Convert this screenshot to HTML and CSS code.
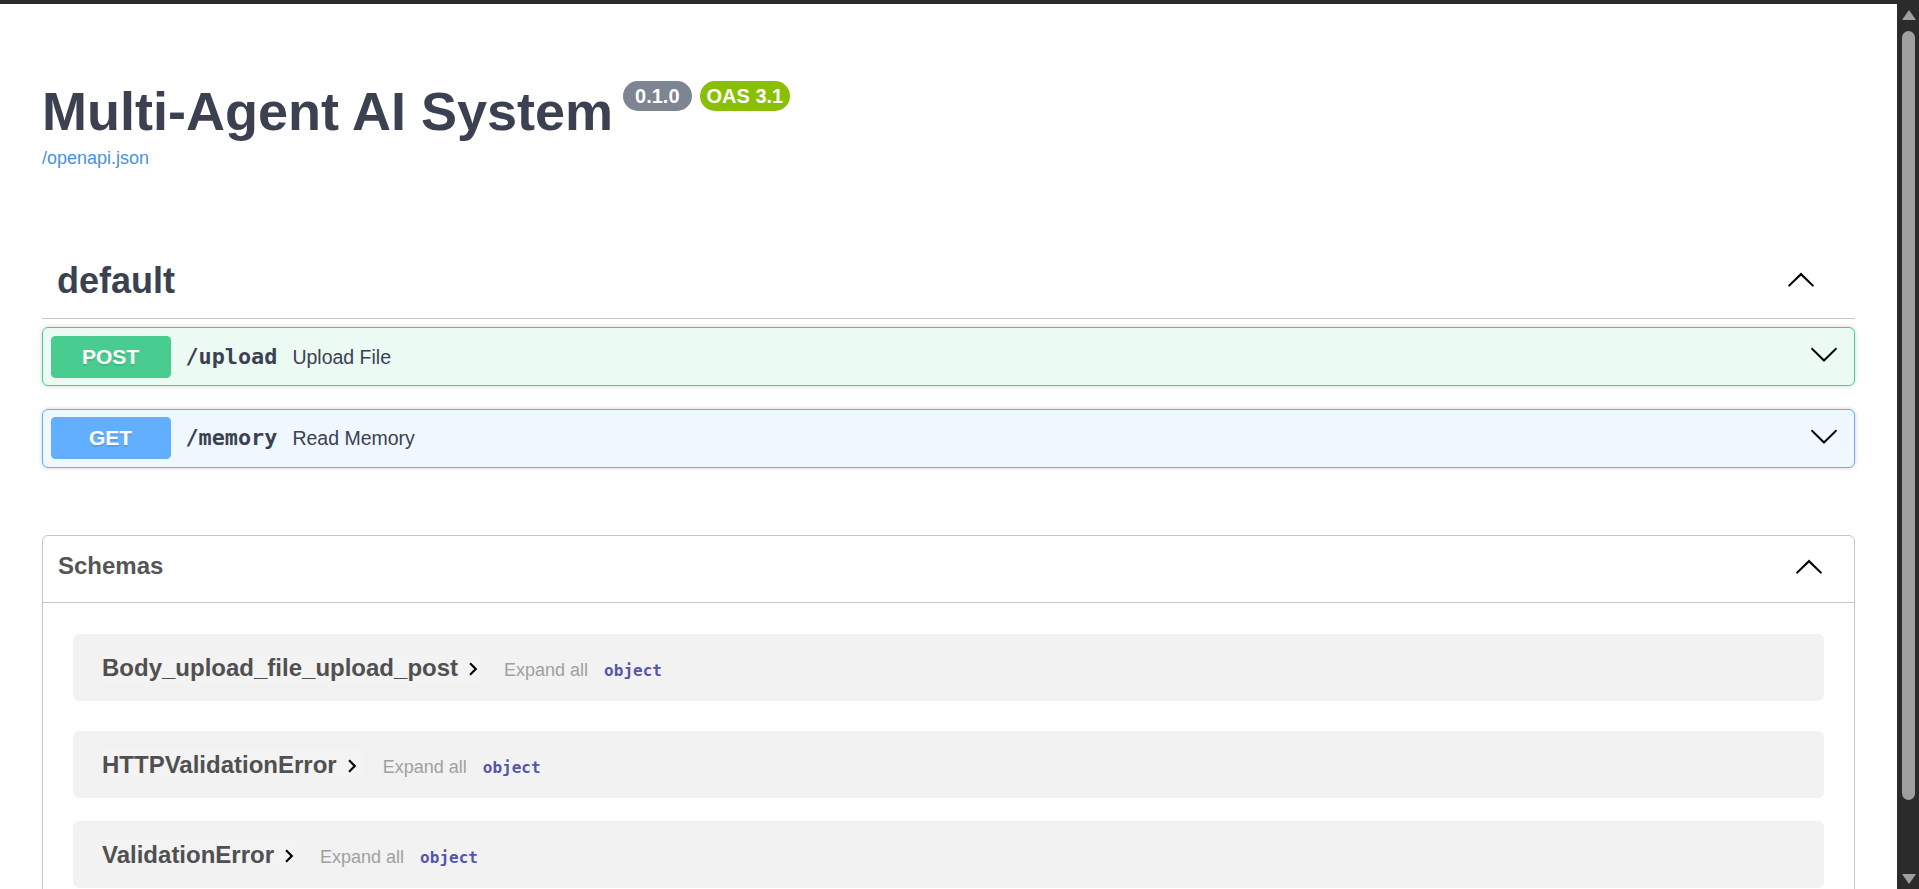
FILE: index.html
```html
<!DOCTYPE html>
<html lang="en">
<head>
<meta charset="utf-8">
<title>Multi-Agent AI System - Swagger UI</title>
<link rel="stylesheet" href="styles.css">
</head>
<body>
<div class="window">
  <div class="chrome-top"></div>
  <main class="page">
    <div class="wrapper">
      <section class="info">
        <h2 class="title">
          <span class="title-text">Multi-Agent AI System</span>
          <span class="badge badge-version">0.1.0</span>
          <span class="badge badge-oas">OAS 3.1</span>
        </h2>
        <a class="spec-link" href="#">/openapi.json</a>
      </section>

      <section class="tag-section">
        <h3 class="tag">
          <span class="tag-name">default</span>
          <button class="tag-arrow" type="button" aria-label="Collapse operation">
            <svg viewBox="0 0 20 20" width="30" height="30"><path d="M17.418 14.908c.272.268.709.268.979 0s.271-.701 0-.969l-7.908-7.83c-.27-.268-.707-.268-.979 0l-7.908 7.83c-.27.268-.27.701 0 .969.271.268.709.268.979 0L10 7.797l7.418 7.111z"/></svg>
          </button>
        </h3>

        <div class="opblock opblock-post">
          <div class="summary-control">
            <span class="method method-post">POST</span>
            <span class="path">/upload</span>
            <span class="desc">Upload File</span>
          </div>
          <svg class="op-arrow" viewBox="0 0 20 20" width="30" height="30"><path d="M17.418 6.109c.272-.268.709-.268.979 0s.271.701 0 .969l-7.908 7.83c-.27.268-.707.268-.979 0l-7.908-7.830c-.27-.268-.27-.701 0-.969.271-.268.709-.268.979 0L10 13.25l7.418-7.141z"/></svg>
        </div>

        <div class="opblock opblock-get">
          <div class="summary-control">
            <span class="method method-get">GET</span>
            <span class="path">/memory</span>
            <span class="desc">Read Memory</span>
          </div>
          <svg class="op-arrow" viewBox="0 0 20 20" width="30" height="30"><path d="M17.418 6.109c.272-.268.709-.268.979 0s.271.701 0 .969l-7.908 7.83c-.27.268-.707.268-.979 0l-7.908-7.83c-.27-.268-.27-.701 0-.969.271-.268.709-.268.979 0L10 13.25l7.418-7.141z"/></svg>
        </div>
      </section>

      <section class="models">
        <h4 class="models-header">
          <span>Schemas</span>
          <svg viewBox="0 0 20 20" width="30" height="30"><path d="M17.418 14.908c.272.268.709.268.979 0s.271-.701 0-.969l-7.908-7.83c-.27-.268-.707-.268-.979 0l-7.908 7.83c-.27.268-.27.701 0 .969.271.268.709.268.979 0L10 7.797l7.418 7.111z"/></svg>
        </h4>
        <div class="models-list">
          <div class="model-container model-first">
            <div class="model-box">
              <span class="model-control"><span class="model-title">Body_upload_file_upload_post</span><svg class="model-toggle" viewBox="0 0 24 24" width="26" height="26"><path d="M10 6 8.59 7.41 13.17 12l-4.58 4.59L10 18l6-6z"/></svg></span>
              <span class="expand-all">Expand all</span>
              <span class="prop-type">object</span>
            </div>
          </div>
          <div class="model-container model-middle">
            <div class="model-box">
              <span class="model-control"><span class="model-title">HTTPValidationError</span><svg class="model-toggle" viewBox="0 0 24 24" width="26" height="26"><path d="M10 6 8.59 7.41 13.17 12l-4.58 4.59L10 18l6-6z"/></svg></span>
              <span class="expand-all">Expand all</span>
              <span class="prop-type">object</span>
            </div>
          </div>
          <div class="model-container model-last">
            <div class="model-box">
              <span class="model-control"><span class="model-title">ValidationError</span><svg class="model-toggle" viewBox="0 0 24 24" width="26" height="26"><path d="M10 6 8.59 7.41 13.17 12l-4.58 4.59L10 18l6-6z"/></svg></span>
              <span class="expand-all">Expand all</span>
              <span class="prop-type">object</span>
            </div>
          </div>
        </div>
      </section>
    </div>
  </main>
</div>
<div class="scrollbar" aria-hidden="true">
  <span class="sb-up"></span>
  <span class="sb-thumb"></span>
  <span class="sb-down"></span>
</div>
</body>
</html>
```

FILE: styles.css
```css
* {
  box-sizing: border-box;
}

html, body {
  height: 100%;
}

body {
  margin: 0;
  display: flex;
  overflow: hidden;
  background: #2b2b2b;
  font-family: "Liberation Sans", Arial, sans-serif;
  color: #3b4151;
}

.window {
  flex: 1;
  display: flex;
  flex-direction: column;
  min-width: 0;
}

.chrome-top {
  height: 4px;
  background: #2b2b2b;
}

.page {
  flex: 1;
  background: #fff;
  overflow: hidden;
}

.wrapper {
  display: flex;
  flex-direction: column;
  padding: 0 42px;
}

/* info */
.info {
  display: flex;
  flex-direction: column;
  padding-top: 77px;
}

.title {
  display: flex;
  align-items: flex-start;
  margin: 0;
  font-size: 54px;
  line-height: 60px;
  font-weight: 700;
  color: #3b4151;
}

.badge {
  margin-left: 8px;
  padding: 3px 10px;
  border-radius: 15px;
  font-size: 20px;
  line-height: 24px;
  font-weight: 700;
  color: #fff;
}

.badge-version {
  margin-left: 10px;
  padding: 3px 12px;
  background: #7d8492;
}

.badge-oas {
  padding: 3px 7px;
  background: #89bf04;
}

.spec-link {
  align-self: flex-start;
  margin-top: 4.5px;
  font-size: 18px;
  line-height: 24px;
  color: #4990e2;
  text-decoration: none;
}

/* tag */
.tag-section {
  display: flex;
  flex-direction: column;
  margin-top: 75.5px;
}

.tag {
  display: flex;
  align-items: center;
  justify-content: space-between;
  margin: 0 0 8px;
  padding: 15px 30px 16px 15px;
  font-size: 36px;
  line-height: 42px;
  font-weight: 700;
  color: #3b4151;
  border-bottom: 1px solid rgba(59, 65, 81, 0.3);
}

.tag-arrow {
  display: flex;
  width: 30px;
  height: 30px;
  margin: 0 9px 4px 0;
  padding: 0;
  border: 0;
  background: none;
}

.tag-arrow svg {
  display: block;
}

/* operations */
.opblock {
  display: flex;
  align-items: center;
  margin-bottom: 22.5px;
  padding: 7.5px;
  border: 1px solid;
  border-radius: 6px;
  box-shadow: 0 0 4.5px rgba(0, 0, 0, 0.19);
}

.opblock-post {
  background: rgba(73, 204, 144, 0.1);
  border-color: #49cc90;
}

.opblock-get {
  background: rgba(97, 175, 254, 0.1);
  border-color: #61affe;
}

.summary-control {
  flex: 1;
  display: flex;
  align-items: baseline;
}

.method {
  width: 120px;
  padding: 9px 0;
  border-radius: 4.5px;
  text-align: center;
  font-size: 21px;
  line-height: 24px;
  font-weight: 700;
  color: #fff;
  text-shadow: 0 1.5px 0 rgba(0, 0, 0, 0.1);
}

.method-post {
  background: #49cc90;
}

.method-get {
  background: #61affe;
}

.path {
  padding: 0 15px;
  font-family: "DejaVu Sans Mono", "Liberation Mono", monospace;
  font-size: 21.8px;
  font-weight: 700;
  color: #3b4151;
}

.desc {
  font-size: 19.5px;
  color: #3b4151;
}

.op-arrow {
  display: block;
  margin: 0 8px 5px 0;
}

/* models */
.models {
  margin-top: 45px;
  border: 1px solid rgba(59, 65, 81, 0.3);
  border-radius: 6px;
  padding-bottom: 30px;
}

.models-header {
  display: flex;
  align-items: flex-start;
  justify-content: space-between;
  margin: 0;
  padding: 15px 30px 21px 15px;
  font-size: 24px;
  line-height: 30px;
  font-weight: 700;
  color: #555;
  border-bottom: 1px solid rgba(59, 65, 81, 0.3);
}

.models-header svg {
  display: block;
}

.models-list {
  display: flex;
  flex-direction: column;
}

.model-container {
  background: rgba(0, 0, 0, 0.05);
  border-radius: 6px;
}

.model-first {
  margin: 31px 30px 30px;
}

.model-middle {
  margin: 0 30px 22.5px;
}

.model-last {
  margin: 0 30px;
}

.model-box {
  display: flex;
  align-items: baseline;
  height: 67px;
  padding: 19px 15px 0 29px;
  white-space: nowrap;
}

.model-control {
  display: inline-flex;
  align-items: flex-start;
  height: 29px;
  font-size: 24px;
  line-height: 29px;
  background: rgba(255, 255, 255, 0.12);
}

.model-title {
  font-weight: 700;
  color: #505050;
}

.model-toggle {
  display: block;
  margin: 3px 0 0 2px;
}

.expand-all {
  margin-left: 18px;
  font-size: 18px;
  color: #a0a0a0;
}

.prop-type {
  margin-left: 16px;
  font-family: "DejaVu Sans Mono", "Liberation Mono", monospace;
  font-size: 16px;
  font-weight: 700;
  color: #55a;
}

/* window scrollbar */
.scrollbar {
  width: 22px;
  flex: none;
  display: flex;
  flex-direction: column;
  align-items: center;
  padding-left: 1px;
  background: #2b2b2b;
}

.sb-up {
  margin-top: 10px;
  border-left: 7px solid transparent;
  border-right: 7px solid transparent;
  border-bottom: 10px solid #9f9f9f;
}

.sb-thumb {
  width: 13px;
  height: 769px;
  margin-top: 11px;
  border-radius: 7px;
  background: #9f9f9f;
}

.sb-down {
  margin-top: 74px;
  border-left: 7px solid transparent;
  border-right: 7px solid transparent;
  border-top: 10px solid #9f9f9f;
}
```
